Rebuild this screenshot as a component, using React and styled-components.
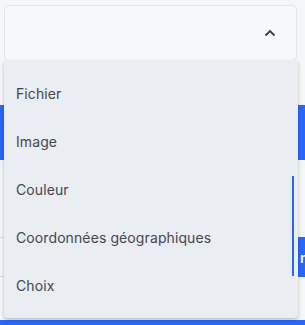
import React from "react";
import styled, { createGlobalStyle } from "styled-components";

const Global = createGlobalStyle`
  html, body { margin: 0; padding: 0; background: #f5f6f8; }
  body { font-family: Inter, Roboto, "Noto Sans", sans-serif; overflow: hidden; }
  * { box-sizing: border-box; }
`;

const Page = styled.div`
  position: relative;
  width: 305px;
  height: 325px;
  overflow: hidden;
  background: #f5f6f8;
`;

const Under = styled.div`
  display: flex;
  flex-direction: column;
  padding-top: 5px;
`;

const SelectBox = styled.div`
  margin: 0 8px 0 4px;
  height: 56px;
  border: 1px solid #e3e5e9;
  border-radius: 5px;
  background: #f7f8fa;
  display: flex;
  align-items: center;
  justify-content: flex-end;
  padding-right: 20px;
`;

const BlueBand = styled.div`
  margin-top: 44px;
  height: 55px;
  background: #2b66fb;
`;

const InputRow = styled.div`
  margin-top: 77px;
  height: 40px;
  display: flex;
`;

const FakeInput = styled.div`
  flex: 1;
  border-top: 1px solid #d9dbe0;
  border-bottom: 1px solid #d9dbe0;
  color: #8a8f98;
  font-size: 14px;
  display: flex;
  align-items: center;
  text-indent: -8px;
  overflow: hidden;
`;

const SideButton = styled.div`
  width: 7px;
  background: #2b66fb;
  color: #fff;
  font-size: 14px;
  font-weight: 600;
  display: flex;
  align-items: center;
  padding-left: 2px;
  overflow: hidden;
`;

const BottomBar = styled.div`
  margin-top: 43px;
  height: 6px;
  background: #2b66fb;
`;

const Menu = styled.div`
  position: absolute;
  left: 4px;
  top: 60px;
  width: 294px;
  height: 258px;
  background: #eaedf2;
  border-radius: 4px;
  box-shadow: 0 2px 4px rgba(0, 0, 0, 0.18), 0 1px 2px rgba(0, 0, 0, 0.1);
  padding: 9px 0 9px;
  display: flex;
  flex-direction: column;
`;

const Item = styled.div`
  height: 48px;
  display: flex;
  align-items: center;
  padding-left: 12px;
  font-size: 14px;
  color: #45474e;
  letter-spacing: 0.1px;
`;

const Scrollbar = styled.div`
  position: absolute;
  left: 288px;
  top: 116px;
  width: 2px;
  height: 100px;
  background: #2b66fb;
`;

const items = ["Fichier", "Image", "Couleur", "Coordonnées géographiques", "Choix"];

export default function App() {
  return (
    <>
      <Global />
      <Page>
        <Under>
          <SelectBox>
            <svg width="12" height="8" viewBox="0 0 12 8">
              <path d="M1.5 6.5 L6 2 L10.5 6.5" fill="none" stroke="#3a3d44" strokeWidth="1.8" />
            </svg>
          </SelectBox>
          <BlueBand />
          <InputRow>
            <FakeInput>r</FakeInput>
            <SideButton>n</SideButton>
          </InputRow>
          <BottomBar />
        </Under>
        <Menu>
          {items.map((t) => (
            <Item key={t}>{t}</Item>
          ))}
          <Scrollbar />
        </Menu>
      </Page>
    </>
  );
}
